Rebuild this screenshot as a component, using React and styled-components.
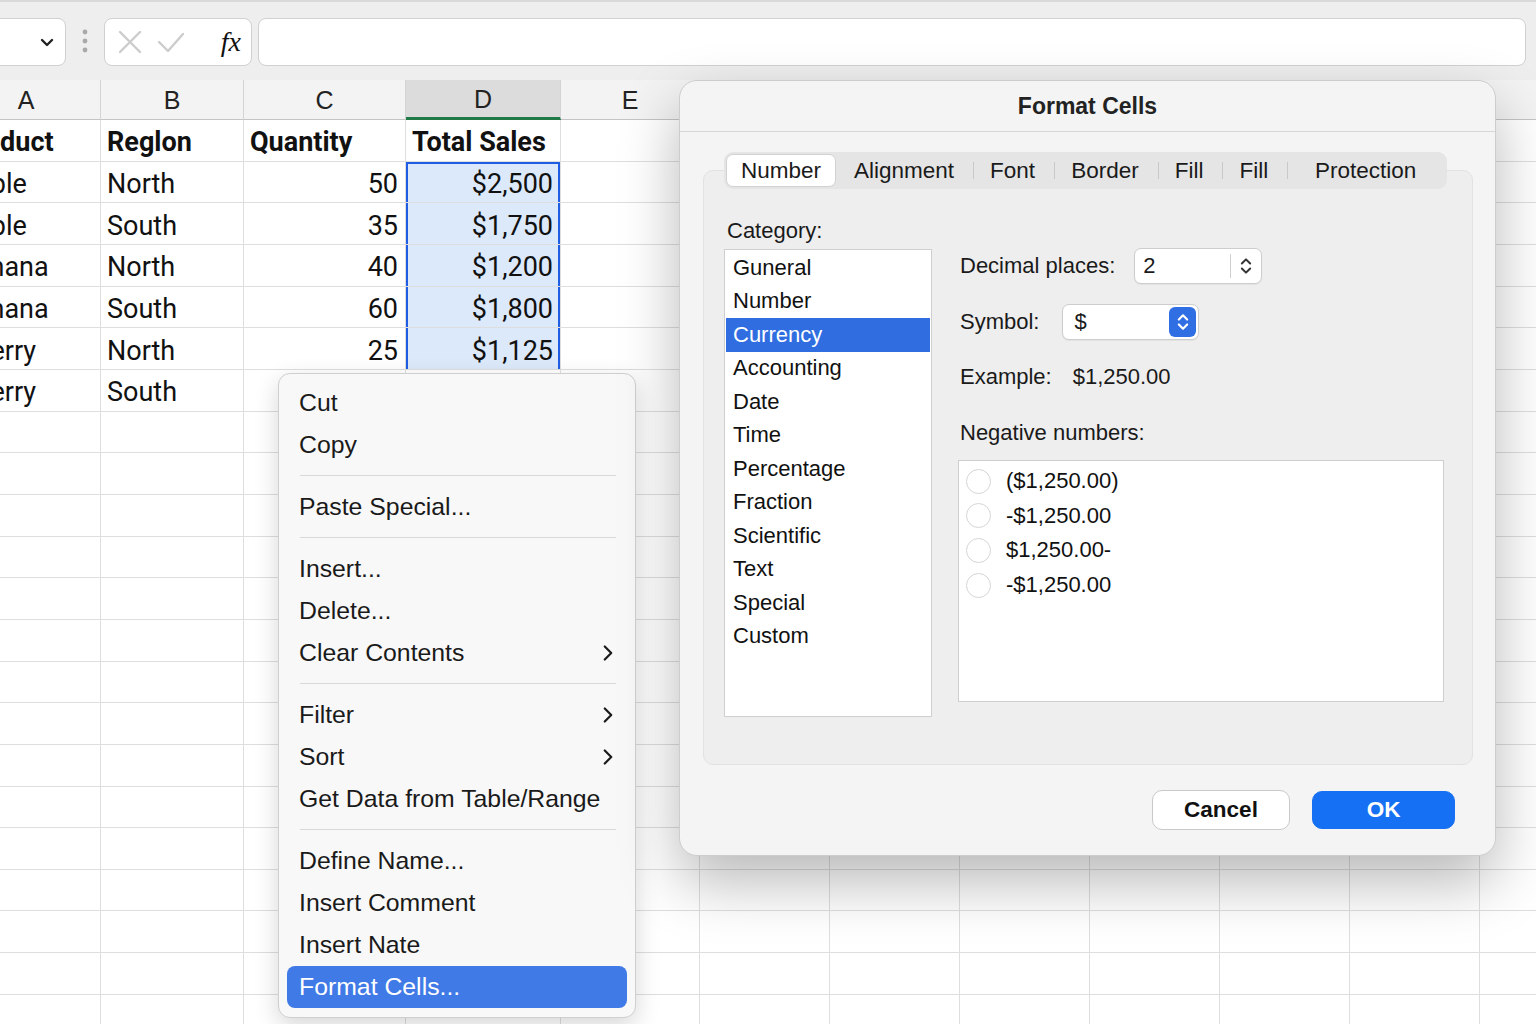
import styled, { createGlobalStyle } from "styled-components";
import { ChevronRight, ChevronsUpDown } from "lucide-react";

const GlobalStyle = createGlobalStyle`
  html, body {
    margin: 0;
    padding: 0;
    overflow: hidden;
  }
  body {
    background: #ffffff;
    font-family: "Liberation Sans", Arial, sans-serif;
    color: #1a1a1a;
  }
`;

// only A–E have visible headings; the rest sit under the dialog
const COLUMNS = [
  { key: "A", width: 149, label: "A" },
  { key: "B", width: 143, label: "B" },
  { key: "C", width: 162, label: "C" },
  { key: "D", width: 155, label: "D" },
  { key: "E", width: 139, label: "E" },
  ...["F", "G", "H", "I", "J", "K", "L"].map((key) => ({ key, width: 130, label: "" })),
];

const DATA = [
  ["Product", "Reglon", "Quantity", "Total Sales"],
  ["Apple", "North", "50", "$2,500"],
  ["Apple", "South", "35", "$1,750"],
  ["Banana", "North", "40", "$1,200"],
  ["Banana", "South", "60", "$1,800"],
  ["Cherry", "North", "25", "$1,125"],
  ["Cherry", "South", "", ""],
];

const ROW_COUNT = 22;

const MENU = [
  { label: "Cut" },
  { label: "Copy" },
  { divider: true },
  { label: "Paste Special..." },
  { divider: true },
  { label: "Insert..." },
  { label: "Delete..." },
  { label: "Clear Contents", sub: true },
  { divider: true },
  { label: "Filter", sub: true },
  { label: "Sort", sub: true },
  { label: "Get Data from Table/Range" },
  { divider: true },
  { label: "Define Name..." },
  { label: "Insert Comment" },
  { label: "Insert Nate" },
  { label: "Format Cells...", active: true },
];

const TABS = ["Number", "Alignment", "Font", "Border", "Fill", "Fill", "Protection"];

const CATEGORIES = [
  "Guneral",
  "Number",
  "Currency",
  "Accounting",
  "Date",
  "Time",
  "Percentage",
  "Fraction",
  "Scientific",
  "Text",
  "Special",
  "Custom",
];

const NEGATIVES = ["($1,250.00)", "-$1,250.00", "$1,250.00-", "-$1,250.00"];

const Page = styled.div`
  position: relative;
  width: 1536px;
  height: 1024px;
  overflow: hidden;
  background: #ffffff;
`;

/* formula bar */
const Toolbar = styled.div`
  box-sizing: border-box;
  height: 80px;
  display: flex;
  align-items: flex-start;
  padding: 18px 10px 0 0;
  background: #eeeeee;
  border-top: 2px solid #d9d9d9;
`;

const NameBox = styled.div`
  box-sizing: border-box;
  width: 86px;
  height: 48px;
  margin-top: -2px;
  margin-left: -20px;
  display: flex;
  align-items: center;
  justify-content: flex-end;
  padding-right: 11px;
  background: #ffffff;
  border: 1px solid #d0d0d0;
  border-radius: 8px;
`;

const Grip = styled.div`
  width: 38px;
  height: 48px;
  margin-top: -2px;
  display: flex;
  align-items: center;
  justify-content: center;
`;

const FormulaButtons = styled.div`
  box-sizing: border-box;
  width: 148px;
  height: 48px;
  margin-top: -2px;
  display: flex;
  align-items: center;
  padding: 0 10px 0 12px;
  gap: 14px;
  background: #ffffff;
  border: 1px solid #d0d0d0;
  border-radius: 8px;
`;

const Fx = styled.span`
  margin-left: auto;
  font-family: "Liberation Serif", "Times New Roman", serif;
  font-style: italic;
  font-size: 28px;
  color: #111;
  line-height: 1;
`;

const FormulaInput = styled.div`
  flex: 1;
  height: 48px;
  margin-top: -2px;
  margin-left: 6px;
  box-sizing: border-box;
  background: #ffffff;
  border: 1px solid #d0d0d0;
  border-radius: 8px;
`;

/* grid */
const Sheet = styled.div`
  display: grid;
  grid-template-columns: ${COLUMNS.map((c) => `${c.width}px`).join(" ")};
  grid-template-rows: 40px;
  grid-auto-rows: 41.67px;
  margin-left: -48px;
`;

const ColHead = styled.div`
  box-sizing: border-box;
  display: flex;
  align-items: center;
  justify-content: center;
  padding-top: 1px;
  font-family: "Liberation Sans", Arial, sans-serif;
  font-size: 25px;
  color: #222;
  background: ${({ $active }) => ($active ? "#dcdcdc" : "#f3f3f3")};
  border-right: 1px solid #d4d4d4;
  border-bottom: ${({ $active }) => ($active ? "3px solid #1f7a48" : "1px solid #c4c4c4")};
`;

const Cell = styled.div`
  box-sizing: border-box;
  display: flex;
  align-items: center;
  justify-content: ${({ $right }) => ($right ? "flex-end" : "flex-start")};
  padding: ${({ $right }) => ($right ? "4px 7px 0 6px" : "4px 6px 0")};
  overflow: hidden;
  white-space: nowrap;
  font-family: Roboto, "Liberation Sans", sans-serif;
  font-size: 27px;
  font-weight: ${({ $bold }) => ($bold ? 700 : 400)};
  color: #111;
  background: ${({ $selected }) => ($selected ? "#dce9fb" : "#ffffff")};
  border-right: 1px solid #dedede;
  border-bottom: 1px solid #dedede;
  box-shadow: ${({ $selected, $top }) =>
    $selected
      ? `inset 2px 0 0 #1f5ee3, inset -2px 0 0 #1f5ee3${$top ? ", inset 0 2px 0 #1f5ee3" : ""}`
      : "none"};
`;

/* context menu */
const Menu = styled.div`
  position: absolute;
  left: 278px;
  top: 373px;
  width: 358px;
  box-sizing: border-box;
  padding: 8px 8px 9px;
  background: #f8f8f8;
  border: 1px solid #cfcfcf;
  border-radius: 12px;
  box-shadow: 0 8px 24px rgba(0, 0, 0, 0.16);
`;

const MenuItem = styled.div`
  height: 42px;
  display: flex;
  align-items: center;
  padding: 0 6px 0 12px;
  border-radius: 8px;
  font-size: 24.8px;
  color: ${({ $active }) => ($active ? "#ffffff" : "#1a1a1a")};
  background: ${({ $active }) => ($active ? "#3f7ae6" : "transparent")};

  svg {
    margin-left: auto;
  }
`;

const MenuDivider = styled.div`
  height: 1px;
  margin: 9px 11px 10px 13px;
  background: #d8d8d8;
`;

/* format cells dialog */
const Dialog = styled.div`
  position: absolute;
  left: 679px;
  top: 80px;
  width: 817px;
  box-sizing: border-box;
  background: #f4f4f4;
  border: 1px solid #cdcdcd;
  border-radius: 18px;
  box-shadow: 0 26px 60px rgba(0, 0, 0, 0.28);
  padding-bottom: 25px;
`;

const TitleBar = styled.div`
  height: 50px;
  display: flex;
  align-items: center;
  justify-content: center;
  font-size: 23px;
  font-weight: 700;
  color: #222;
  border-bottom: 1px solid #d6d6d6;
`;

const Panel = styled.div`
  margin: 38px 22px 0 23px;
  padding-bottom: 47px;
  background: #eeeeee;
  border: 1px solid #e2e2e2;
  border-radius: 10px;
`;

const TabBar = styled.div`
  box-sizing: border-box;
  height: 37px;
  margin: -19px 25px 0 20px;
  padding: 2px;
  display: flex;
  align-items: stretch;
  background: #e5e5e5;
  border-radius: 9px;
`;

const Tab = styled.div`
  position: relative;
  box-sizing: border-box;
  display: flex;
  align-items: center;
  justify-content: center;
  padding: 0 ${({ $selected }) => ($selected ? 14 : 17)}px;
  flex: ${({ $grow }) => ($grow ? "1 0 auto" : "0 0 auto")};
  font-size: 22.5px;
  color: #1a1a1a;
  background: ${({ $selected }) => ($selected ? "#ffffff" : "transparent")};
  border: 1px solid ${({ $selected }) => ($selected ? "#d2d2d2" : "transparent")};
  border-radius: 7px;

  &::before {
    content: "";
    display: ${({ $divider }) => ($divider ? "block" : "none")};
    position: absolute;
    left: 0;
    top: 7px;
    bottom: 7px;
    width: 1px;
    background: #c9c9c9;
  }
`;

const PanelBody = styled.div`
  display: grid;
  grid-template-columns: 208px 1fr;
  column-gap: 26px;
  padding: 29px 27px 0 20px;
`;

const Label = styled.div`
  height: 26px;
  line-height: 26px;
  font-size: 22px;
  color: #1a1a1a;
  padding-left: ${({ $inset }) => ($inset ? 2 : 3)}px;
  margin-top: ${({ $mt }) => $mt || 0}px;
  white-space: nowrap;
`;

const ListBox = styled.div`
  box-sizing: border-box;
  height: 468px;
  margin-top: 5px;
  padding: 1px;
  background: #ffffff;
  border: 1px solid #cfcfcf;
`;

const ListItem = styled.div`
  height: 33.5px;
  display: flex;
  align-items: center;
  padding-left: 7px;
  font-size: 22px;
  color: ${({ $selected }) => ($selected ? "#ffffff" : "#111")};
  background: ${({ $selected }) => ($selected ? "#2f6de1" : "transparent")};
`;

const Options = styled.div`
  display: flex;
  flex-direction: column;
`;

const FieldRow = styled.div`
  display: flex;
  align-items: center;
  height: ${({ $h }) => $h || 36}px;
  margin-top: ${({ $mt }) => $mt || 0}px;
  padding-left: 2px;
  font-size: 22px;
  color: #1a1a1a;
  white-space: nowrap;
`;

const Spinner = styled.div`
  box-sizing: border-box;
  width: 128px;
  height: 36px;
  margin-left: 19px;
  display: flex;
  align-items: center;
  padding-left: 8px;
  background: #ffffff;
  border: 1px solid #cdcdcd;
  border-radius: 7px;
  box-shadow: 0 1px 1px rgba(0, 0, 0, 0.05);
`;

const SpinnerArrows = styled.div`
  margin-left: auto;
  width: 30px;
  height: 24px;
  display: flex;
  align-items: center;
  justify-content: center;
  border-left: 1px solid #cfcfcf;
  color: #333;
`;

const Select = styled.div`
  box-sizing: border-box;
  width: 137px;
  height: 36px;
  margin-left: 23px;
  display: flex;
  align-items: center;
  padding: 0 2px 0 11px;
  background: #ffffff;
  border: 1px solid #cdcdcd;
  border-radius: 7px;
  box-shadow: 0 1px 1px rgba(0, 0, 0, 0.05);
`;

const SelectButton = styled.div`
  margin-left: auto;
  width: 27px;
  height: 30px;
  display: flex;
  align-items: center;
  justify-content: center;
  background: #2f6fe3;
  border-radius: 6px;
  color: #ffffff;
`;

const ExampleValue = styled.span`
  margin-left: 21px;
`;

const NegativeBox = styled.div`
  box-sizing: border-box;
  width: 486px;
  height: 242px;
  margin-top: 14px;
  padding: 3px 0 0 7px;
  background: #ffffff;
  border: 1px solid #cfcfcf;
`;

const RadioRow = styled.div`
  height: 34.6px;
  display: flex;
  align-items: center;
  gap: 15px;
  font-size: 22px;
  color: #111;
`;

const Radio = styled.span`
  box-sizing: border-box;
  width: 25px;
  height: 25px;
  border-radius: 50%;
  border: 1px solid #d6d6d6;
  background: #ffffff;
`;

const ButtonRow = styled.div`
  display: flex;
  justify-content: flex-end;
  align-items: center;
  gap: 22px;
  padding: 25px 40px 0 0;
`;

const Button = styled.div`
  box-sizing: border-box;
  width: ${({ $primary }) => ($primary ? 143 : 138)}px;
  height: ${({ $primary }) => ($primary ? 38 : 40)}px;
  display: flex;
  align-items: center;
  justify-content: center;
  font-size: 22.5px;
  font-weight: 700;
  color: ${({ $primary }) => ($primary ? "#ffffff" : "#111")};
  background: ${({ $primary }) => ($primary ? "#1670f4" : "#ffffff")};
  border: 1px solid ${({ $primary }) => ($primary ? "#1670f4" : "#c9c9c9")};
  border-radius: 10px;
`;

function FormulaBar() {
  return (
    <Toolbar>
      <NameBox>
        <svg width="14" height="9" viewBox="0 0 14 9">
          <path d="M2 2l5 5 5-5" fill="none" stroke="#222" strokeWidth="2.4" strokeLinecap="round" strokeLinejoin="round" />
        </svg>
      </NameBox>
      <Grip>
        <svg width="6" height="26" viewBox="0 0 6 26">
          <circle cx="3" cy="3" r="2.4" fill="#a9a9a9" />
          <circle cx="3" cy="12" r="2.4" fill="#a9a9a9" />
          <circle cx="3" cy="21" r="2.4" fill="#a9a9a9" />
        </svg>
      </Grip>
      <FormulaButtons>
        <svg width="26" height="26" viewBox="0 0 26 26">
          <path d="M3 3l20 20M23 3L3 23" stroke="#cccccc" strokeWidth="2.4" strokeLinecap="round" />
        </svg>
        <svg width="28" height="22" viewBox="0 0 28 22">
          <path d="M2 11l9 9L26 3" fill="none" stroke="#cccccc" strokeWidth="2.4" strokeLinecap="round" strokeLinejoin="round" />
        </svg>
        <Fx>fx</Fx>
      </FormulaButtons>
      <FormulaInput />
    </Toolbar>
  );
}

function Grid() {
  const rows = Array.from({ length: ROW_COUNT }, (_, r) => DATA[r] || []);
  return (
    <Sheet>
      {COLUMNS.map((col) => (
        <ColHead key={col.key} $active={col.key === "D"}>
          {col.label}
        </ColHead>
      ))}
      {rows.map((row, r) =>
        COLUMNS.map((col, c) => {
          const value = row[c] || "";
          const isHeader = r === 0;
          const numeric = !isHeader && (c === 2 || c === 3);
          const selected = c === 3 && r >= 1 && r <= 5;
          return (
            <Cell
              key={`${r}-${col.key}`}
              $bold={isHeader}
              $right={numeric}
              $selected={selected}
              $top={selected && r === 1}
            >
              {value}
            </Cell>
          );
        })
      )}
    </Sheet>
  );
}

function ContextMenu() {
  return (
    <Menu>
      {MENU.map((item, i) =>
        item.divider ? (
          <MenuDivider key={i} />
        ) : (
          <MenuItem key={i} $active={item.active}>
            {item.label}
            {item.sub && <ChevronRight size={26} strokeWidth={2} />}
          </MenuItem>
        )
      )}
    </Menu>
  );
}

function FormatCellsDialog() {
  return (
    <Dialog>
      <TitleBar>Format Cells</TitleBar>
      <Panel>
        <TabBar>
          {TABS.map((tab, i) => (
            <Tab key={i} $selected={i === 0} $divider={i >= 2} $grow={i === TABS.length - 1}>
              {tab}
            </Tab>
          ))}
        </TabBar>
        <PanelBody>
          <div>
            <Label>Category:</Label>
            <ListBox>
              {CATEGORIES.map((name) => (
                <ListItem key={name} $selected={name === "Currency"}>
                  {name}
                </ListItem>
              ))}
            </ListBox>
          </div>
          <Options>
            <FieldRow $mt={30}>
              Decimal places:
              <Spinner>
                2
                <SpinnerArrows>
                  <ChevronsUpDown size={20} strokeWidth={2.4} />
                </SpinnerArrows>
              </Spinner>
            </FieldRow>
            <FieldRow $mt={20}>
              Symbol:
              <Select>
                $
                <SelectButton>
                  <ChevronsUpDown size={20} strokeWidth={2.6} />
                </SelectButton>
              </Select>
            </FieldRow>
            <FieldRow $mt={24} $h={26}>
              Example:
              <ExampleValue>$1,250.00</ExampleValue>
            </FieldRow>
            <Label $inset $mt={30}>
              Negative numbers:
            </Label>
            <NegativeBox>
              {NEGATIVES.map((text, i) => (
                <RadioRow key={i}>
                  <Radio />
                  {text}
                </RadioRow>
              ))}
            </NegativeBox>
          </Options>
        </PanelBody>
      </Panel>
      <ButtonRow>
        <Button>Cancel</Button>
        <Button $primary>OK</Button>
      </ButtonRow>
    </Dialog>
  );
}

export default function App() {
  return (
    <>
      <GlobalStyle />
      <Page>
        <FormulaBar />
        <Grid />
        <ContextMenu />
        <FormatCellsDialog />
      </Page>
    </>
  );
}
